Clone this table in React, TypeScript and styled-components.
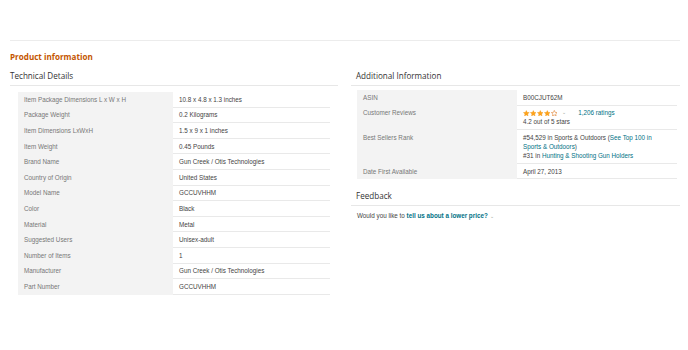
import React from 'react';
import styled, { createGlobalStyle } from 'styled-components';

const GlobalStyle = createGlobalStyle`
  body {
    margin: 0;
    background: #fff;
    font-family: "Liberation Sans", Arial, sans-serif;
    color: #333;
  }
`;

const Page = styled.div`
  width: 688px;
  height: 350px;
  box-sizing: border-box;
  padding: 40px 8px 0 10px;
`;

const TopRule = styled.div`
  border-top: 1px solid #ececec;
`;

const Title = styled.h2`
  margin: 10px 0 0;
  font-family: "Open Sans", sans-serif;
  font-size: 8.1px;
  line-height: 11px;
  font-weight: 700;
  color: #c45500;
`;

const Columns = styled.div`
  display: grid;
  grid-template-columns: 328px 329px;
  column-gap: 13px;
  margin-top: 8px;
  align-items: start;
`;

const Section = styled.section``;

const SectionHeader = styled.h3<{ $indent?: number }>`
  margin: 0;
  padding: 0 0 4px ${({ $indent }) => $indent ?? 0}px;
  border-bottom: 1px solid #e7e7e7;
  font-family: "Open Sans", sans-serif;
  font-size: 8.1px;
  line-height: 11px;
  font-weight: 400;
  color: #333;
`;

const Table = styled.table<{ $margin: string; $width: number }>`
  border-collapse: collapse;
  margin: ${({ $margin }) => $margin};
  width: ${({ $width }) => $width}px;
  font-size: 6.3px;
  line-height: 9px;
`;

const Label = styled.th<{ $width: number }>`
  width: ${({ $width }) => $width}px;
  background: #f3f3f3;
  color: #777;
  font-weight: 400;
  text-align: left;
  vertical-align: top;
  padding: 2.8px 6px;
  border-bottom: 1px solid #f3f3f3;
`;

const Value = styled.td`
  color: #444;
  vertical-align: top;
  padding: 2.8px 6px;
  border-bottom: 1px solid #e9e9e9;
`;

const Link = styled.span<{ $bold?: boolean }>`
  color: #007185;
  font-weight: ${({ $bold }) => ($bold ? 700 : 400)};
`;

const RatingLine = styled.div`
  display: flex;
  align-items: center;
  height: 9px;
`;

const Stars = styled.span`
  display: inline-flex;
  gap: 0.3px;
  margin-right: 5px;
`;

const Caret = styled.span<{ $gap: number }>`
  color: #999;
  font-size: 5px;
  margin-right: ${({ $gap }) => $gap}px;
`;

const FeedbackHeader = styled(SectionHeader)`
  margin-top: 11px;
`;

const FeedbackText = styled.p`
  margin: 5px 0 0 6px;
  font-size: 6.3px;
  line-height: 9px;
  color: #444;
`;

const Star: React.FC<{ filled: boolean }> = ({ filled }) => (
  <svg width="6.6" height="6.6" viewBox="0 0 24 24">
    <polygon
      points="12,1.5 15.1,8.6 22.8,9.3 17,14.4 18.7,22 12,18 5.3,22 7,14.4 1.2,9.3 8.9,8.6"
      fill={filled ? '#ffa41c' : '#fff'}
      stroke={filled ? '#e88b00' : '#de7921'}
      strokeWidth={filled ? 1 : 2}
    />
  </svg>
);

const technical: [string, string][] = [
  ['Item Package Dimensions L x W x H', '10.8 x 4.8 x 1.3 inches'],
  ['Package Weight', '0.2 Kilograms'],
  ['Item Dimensions LxWxH', '1.5 x 9 x 1 inches'],
  ['Item Weight', '0.45 Pounds'],
  ['Brand Name', 'Gun Creek / Otis Technologies'],
  ['Country of Origin', 'United States'],
  ['Model Name', 'GCCUVHHM'],
  ['Color', 'Black'],
  ['Material', 'Metal'],
  ['Suggested Users', 'Unisex-adult'],
  ['Number of Items', '1'],
  ['Manufacturer', 'Gun Creek / Otis Technologies'],
  ['Part Number', 'GCCUVHHM'],
];

const App: React.FC = () => (
  <Page>
    <GlobalStyle />
    <TopRule />
    <Title>Product information</Title>
    <Columns>
      <Section>
        <SectionHeader>Technical Details</SectionHeader>
        <Table $margin="6px 0 0 8px" $width={312}>
          <tbody>
            {technical.map(([label, value]) => (
              <tr key={label}>
                <Label $width={143}>{label}</Label>
                <Value>{value}</Value>
              </tr>
            ))}
          </tbody>
        </Table>
      </Section>

      <Section>
        <SectionHeader $indent={5}>Additional Information</SectionHeader>
        <Table $margin="4px 0 0 6px" $width={320}>
          <tbody>
            <tr>
              <Label $width={148}>ASIN</Label>
              <Value>B00CJUT62M</Value>
            </tr>
            <tr>
              <Label $width={148}>Customer Reviews</Label>
              <Value>
                <RatingLine>
                  <Stars>
                    {[true, true, true, true, false].map((f, i) => (
                      <Star key={i} filled={f} />
                    ))}
                  </Stars>
                  <Caret $gap={12}>⌄</Caret>
                  <Link>1,206 ratings</Link>
                </RatingLine>
                <div>4.2 out of 5 stars</div>
              </Value>
            </tr>
            <tr>
              <Label $width={148}>Best Sellers Rank</Label>
              <Value>
                <div>
                  #54,529 in Sports &amp; Outdoors (
                  <Link>See Top 100 in Sports &amp; Outdoors</Link>)
                </div>
                <div>
                  #31 in <Link>Hunting &amp; Shooting Gun Holders</Link>
                </div>
              </Value>
            </tr>
            <tr>
              <Label $width={148}>Date First Available</Label>
              <Value>April 27, 2013</Value>
            </tr>
          </tbody>
        </Table>

        <FeedbackHeader $indent={5}>Feedback</FeedbackHeader>
        <FeedbackText>
          Would you like to <Link $bold>tell us about a lower price?</Link>{' '}
          <Caret $gap={0}>⌄</Caret>
        </FeedbackText>
      </Section>
    </Columns>
  </Page>
);

export default App;
